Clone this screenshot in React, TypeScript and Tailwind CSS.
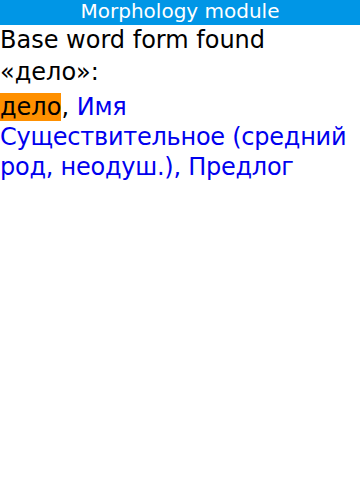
export default function App() {
  return (
    <div className="w-[360px] h-[480px] bg-white" style={{ fontFamily: '"DejaVu Sans", sans-serif' }}>
      <div className="h-[25px] bg-[#0096e6] text-white text-[20px] leading-[23px] text-center">
        Morphology module
      </div>
      <div className="text-[24px] text-black">
        <p className="leading-[31.5px]">Base word form found<br />«дело»:</p>
        <p className="leading-[30px] mt-[3.6px] whitespace-nowrap">
          <span className="bg-[#ff9000]">дело</span>,{' '}
          <span className="text-[#0000ee] tracking-[-0.25px]">
            Имя
            <br />
            Существительное (средний
            <br />
            род, неодуш.), Предлог
          </span>
        </p>
      </div>
    </div>
  );
}
